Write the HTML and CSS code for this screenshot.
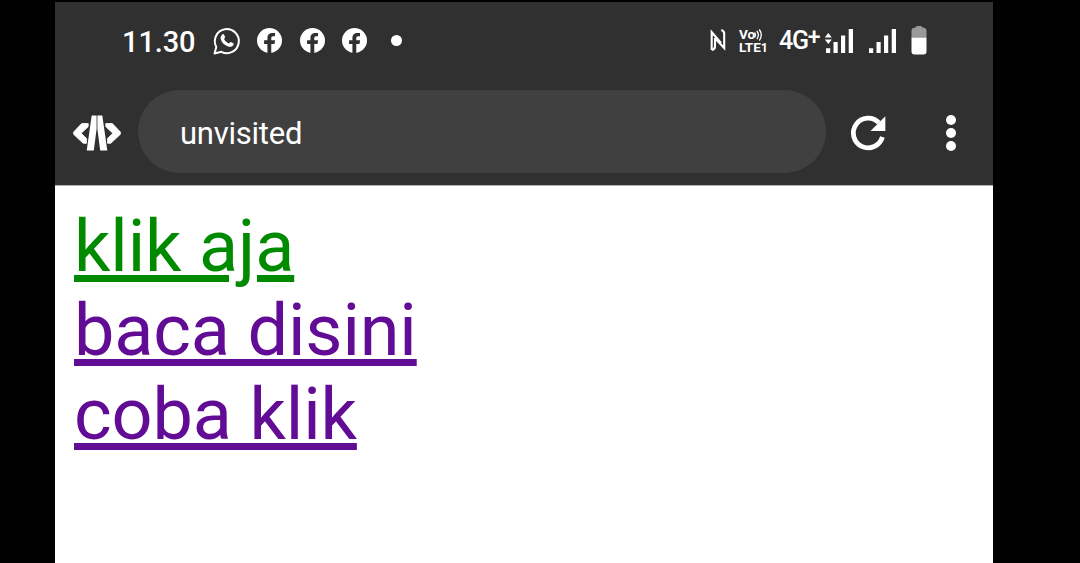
FILE: index.html
```html
<!DOCTYPE html>
<html lang="id">
<head>
<meta charset="utf-8">
<title>unvisited</title>
<link rel="stylesheet" href="styles.css">
</head>
<body>
<div class="phone">
  <header class="chrome">
    <div class="status">
      <span class="time">11.30</span>
      <svg class="whatsapp" viewBox="0 0 28 28" width="28" height="28">
        <path d="M1.500 26.500l1.800-6.600A12 12 0 1 1 8.300 24.800z" fill="none" stroke="#fff" stroke-width="2" stroke-linejoin="round"/>
        <path d="M9.300 7.400c.6-.5 1.500-.4 1.800.3l1 2.400c.2.600-.9 1.500-1 2 .9 2 2.500 3.500 4.700 4.300.6-.2 1.300-1.600 1.900-1.500l2.600 1.300c.7.400.4 1.700-.2 2.400-1.300 1.400-3.300 1.500-5.200.8-3.200-1.200-5.500-3.300-6.900-6.400-.8-2-.4-4.200 1.300-5.600z" fill="#fff"/>
      </svg>
      <div class="feeds">
        <svg viewBox="0 0 24 24" width="25" height="25"><use href="#fb"/></svg>
        <svg viewBox="0 0 24 24" width="25" height="25"><use href="#fb"/></svg>
        <svg viewBox="0 0 24 24" width="25" height="25"><use href="#fb"/></svg>
      </div>
      <span class="more-dot"></span>
      <svg class="nfc" viewBox="0 0 16 24" width="16" height="24">
        <path d="M1.700 22V4.200L11 15M5 10.200L14.200 20V5.500c0-2-1-3-2.900-3.600M1.700 22c2.200-.5 3.300-1.700 3.300-3.500V10" fill="none" stroke="#fff" stroke-width="2.100"/>
      </svg>
      <div class="volte">
        <div class="vo">Vo<svg viewBox="0 0 8 12" width="8" height="12"><path d="M-.5 3.500q2 2.500 0 5M1.800 1.800q3.200 4.200 0 8.400M4.300 .5q3.900 5.500 0 11" fill="none" stroke="#fff" stroke-width="1.300"/></svg></div>
        <div class="lte">LTE<span>1</span></div>
      </div>
      <span class="network">4G<sup>+</sup></span>
      <svg class="signal-one" viewBox="0 0 28 26" width="28" height="26">
        <path d="M0 20.300h4.200v4.700H0zM7.500 14h4.200v11H7.500zM15 7.500h4.200v17.500H15zM22.700 1h4.300v24h-4.300zM-1.200 9.400L2.300 5l3.500 4.400zM-1.200 11.600L2.300 16l3.500-4.400z" fill="#fff"/>
      </svg>
      <svg class="signal-two" viewBox="0 0 28 26" width="28" height="26">
        <path d="M0 20.300h4.200v4.700H0zM7.500 14h4.200v11H7.500zM15 7.500h4.200v17.500H15zM22.700 1h4.300v24h-4.300z" fill="#fff"/>
      </svg>
      <svg class="battery" viewBox="0 0 16 30" width="16" height="30">
        <path d="M.5 12.500V5.500a2.700 2.700 0 0 1 2.500-2.700l1.500-.3Q5 1 6.500 1h3q1.500 0 2 1.500l1.500.3a2.700 2.700 0 0 1 2.500 2.700v7z" fill="#999"/>
        <path d="M.5 12.500h15V26.500a3 3 0 0 1-3 3h-9a3 3 0 0 1-3-3z" fill="#fff"/>
      </svg>
    </div>
    <div class="toolbar">
      <svg class="logo" viewBox="0 0 48 36" width="48" height="36">
        <path d="M8.700 8.500h6.500v3.200L8.200 18.200l5.300 5.300v4.800H10.200L.6 19.300v-2.200zM39.300 8.500h-6.500v3.200l7 6.500-5.300 5.300v4.800h3.300l9.600-9v-2.200z" fill="#fff" stroke="#fff" stroke-width=".8" stroke-linejoin="round"/>
        <path d="M18.700.5h4.900V14l-2.800 21.500h-7.100zM29.300.5h-4.900V14l2.800 21.500h7.100z" fill="#fff"/>
      </svg>
      <div class="address">unvisited</div>
      <svg class="reload" viewBox="0 0 36 36" width="36" height="36">
        <path d="M32.400 22A14.800 14.800 0 1 1 28.800 7.700" fill="none" stroke="#fff" stroke-width="4.800"/>
        <path d="M35.300 1.200V16H20.500z" fill="#fff"/>
      </svg>
      <div class="menu"><i></i><i></i><i></i></div>
    </div>
  </header>
  <main class="page">
    <a class="link unvisited" href="#klik">klik aja</a>
    <a class="link visited" href="#baca">baca disini</a>
    <a class="link visited" href="#coba">coba klik</a>
  </main>
</div>
<svg class="symbols" width="0" height="0">
  <symbol id="fb" viewBox="0 0 24 24">
    <circle cx="12" cy="12" r="12" fill="#fff"/>
    <path d="M10 24V15.400H6.800V11.800H10V9.600c0-3.300 2-4.900 4.900-4.900 1.200 0 2.400.2 2.400.2v3h-1.700c-1.500 0-1.900.8-1.900 1.900v2h3.700l-.6 3.600h-3.100V24z" fill="#303030"/>
  </symbol>
</svg>
</body>
</html>
```
FILE: styles.css
```css
* { box-sizing: border-box; }
body {
  margin: 0;
  background: #000;
  font-family: Roboto, "Liberation Sans", sans-serif;
  overflow: hidden;
}
svg { display: block; flex: none; overflow: visible; }
.symbols { display: none; }
.phone {
  width: 938px;
  height: 563px;
  margin-left: 55px;
  padding-top: 2px;
  display: flex;
  flex-direction: column;
}
.chrome {
  height: 184px;
  background: #303030;
  border-bottom: 1px solid #b0b0b0;
  color: #fff;
}
.status {
  height: 78px;
  padding-left: 67px;
  display: flex;
  align-items: center;
}
.time {
  width: 91px;
  font-size: 29px;
  font-weight: 500;
  letter-spacing: -0.1px;
  padding-top: 2px;
}
.whatsapp { margin-top: -1px; }
.feeds { display: flex; gap: 17.500px; margin: -1px 0 0 16px; }
.more-dot {
  width: 11px;
  height: 11px;
  border-radius: 50%;
  background: #fff;
  margin: -2px 0 0 24px;
}
.nfc { margin: -2px 0 0 308px; }
.volte {
  width: 32px;
  height: 26px;
  margin-left: 13px;
  font-size: 13.500px;
  font-weight: 700;
  line-height: 13px;
}
.vo { display: flex; align-items: center; height: 13px; }
.lte { display: flex; height: 13px; }
.lte span { font-size: 12.500px; line-height: 14px; }
.network {
  width: 46px;
  margin: -1px 0 0 8px;
  font-size: 25px;
  line-height: 30px;
  font-weight: 500;
  letter-spacing: -1.300px;
  white-space: nowrap;
}
.network sup { font-size: 23px; line-height: 0; vertical-align: 4px; }
.signal-one { margin-left: 1px; }
.signal-two { margin-left: 15px; }
.battery { margin: -2px 0 0 14px; }
.toolbar {
  height: 104px;
  padding: 10px 37px 11px 18px;
  display: flex;
  align-items: center;
}
.address {
  width: 688px;
  height: 83px;
  margin: 0 24px 0 17px;
  padding-left: 42px;
  border-radius: 42px;
  background: #404040;
  font-size: 31px;
  letter-spacing: -0.25px;
  line-height: 87px;
}
.logo, .reload { margin-top: 3px; }
.menu {
  display: flex;
  flex-direction: column;
  gap: 3px;
  margin: 3px 0 0 auto;
}
.menu i { width: 10px; height: 10px; border-radius: 50%; background: #fff; }
.page {
  flex: 1;
  background: #fff;
  padding: 19px 0 0 19px;
  display: flex;
  flex-direction: column;
  align-items: flex-start;
}
.link {
  font-size: 72px;
  letter-spacing: -0.15px;
  line-height: 84.200px;
  text-decoration: underline;
  text-decoration-thickness: 7px;
  text-underline-offset: 4px;
}
.unvisited { color: #008a00; }
.visited { color: #620c96; }
```
